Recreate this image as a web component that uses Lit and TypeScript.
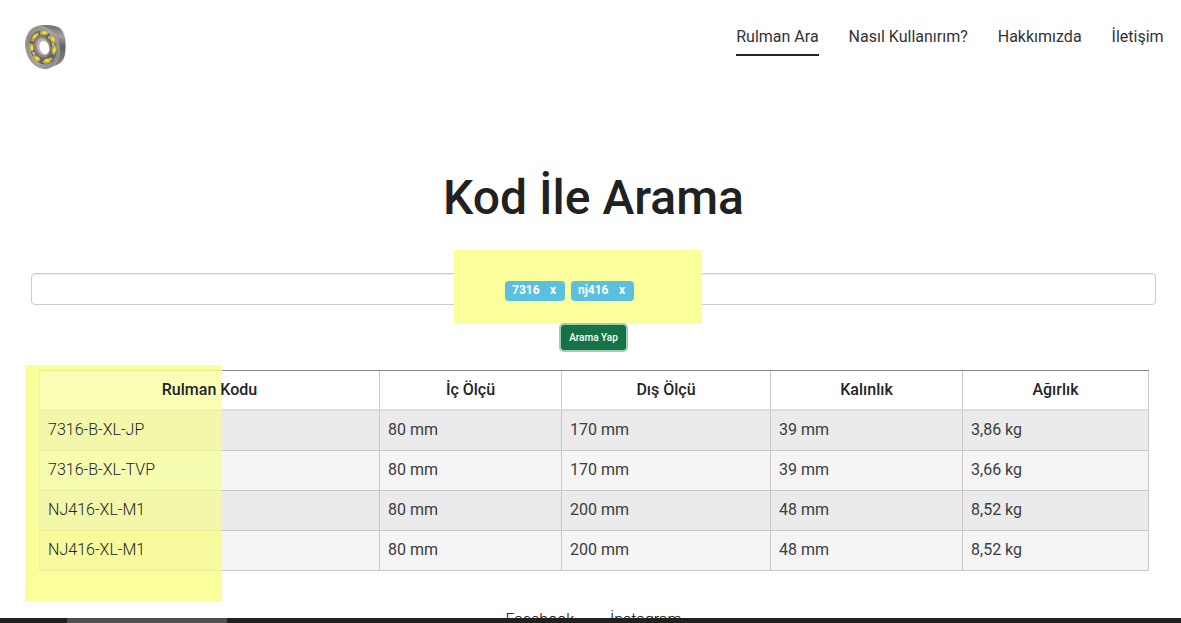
import { LitElement, html, css, svg } from "lit";
import { customElement } from "lit/decorators.js";

const NAV = ["Rulman Ara", "Nasıl Kullanırım?", "Hakkımızda", "İletişim"];
const HEAD = ["Rulman Kodu", "İç Ölçü", "Dış Ölçü", "Kalınlık", "Ağırlık"];
const ROWS = [
  ["7316-B-XL-JP", "80 mm", "170 mm", "39 mm", "3,86 kg"],
  ["7316-B-XL-TVP", "80 mm", "170 mm", "39 mm", "3,66 kg"],
  ["NJ416-XL-M1", "80 mm", "200 mm", "48 mm", "8,52 kg"],
  ["NJ416-XL-M1", "80 mm", "200 mm", "48 mm", "8,52 kg"],
];
// Centre and rotation of each rolling ball in the logo.
const BALLS = [[20, 9, 5], [28.5, 15, 60], [30, 25.5, 100], [23, 37, -15], [12.5, 34.5, 30], [7.5, 23.5, 85], [11, 13, -50]];

@customElement("bearing-logo")
export class BearingLogo extends LitElement {
  static styles = css`
    :host { display: block; width: 44px; height: 48px; }
    svg { display: block; }
  `;
  render() {
    return html`<svg width="44" height="48" viewBox="0 0 44 48">
      <defs>
        <linearGradient id="side" x1="0" y1="0" x2="0" y2="1">
          <stop offset="0" stop-color="#6f6d6b" /><stop offset=".25" stop-color="#a3a19f" />
          <stop offset=".5" stop-color="#646261" /><stop offset="1" stop-color="#918f8d" />
        </linearGradient>
        <linearGradient id="face" x1="0" y1="0" x2="1" y2="1">
          <stop offset="0" stop-color="#807e7c" /><stop offset=".5" stop-color="#aaa8a6" />
          <stop offset="1" stop-color="#7f7d7b" />
        </linearGradient>
      </defs>
      <path d="M13 2C22 0 31 1 36 4C41 9 42 16 41.500 25C41 34 39 38 33 41L22 45Z" fill="url(#side)" />
      <ellipse cx="18.500" cy="23.500" rx="16.500" ry="21.500" transform="rotate(-16 18.500 23.500)" fill="url(#face)" stroke="#9f9d9b" stroke-width="1" />
      <ellipse cx="19" cy="23.500" rx="13" ry="17.200" transform="rotate(-16 19 23.500)" fill="#65625e" />
      <ellipse cx="19" cy="23.500" rx="10.800" ry="14.500" transform="rotate(-16 19 23.500)" fill="none" stroke="#bbb9b5" stroke-width="2.500" stroke-dasharray="3 4" />
      ${BALLS.map(([x, y, a]) => svg`<g transform="translate(${x} ${y}) rotate(${a})">
          <ellipse rx="4.1" ry="2.5" fill="#c9aa2c"/><ellipse cx=".4" cy="-.4" rx="2.3" ry="1.2" fill="#efdf63"/></g>`)}
      <ellipse cx="18.500" cy="22.800" rx="8.600" ry="11.200" transform="rotate(-17 18.500 22.800)" fill="#8d8b89" stroke="#72706e" stroke-width="1" />
      <ellipse cx="19" cy="22.800" rx="6.200" ry="8.600" transform="rotate(-17 19 22.800)" fill="#b8b6b4" />
      <ellipse cx="20.300" cy="23.600" rx="4.700" ry="6.800" transform="rotate(-17 20.300 23.600)" fill="#fff" />
    </svg>`;
  }
}

@customElement("app-root")
export class AppRoot extends LitElement {
  static styles = css`
    :host {
      display: block; position: relative; height: 623px; overflow: hidden;
      background: #fff; color: #212529; font: 400 16px/24px Roboto, sans-serif;
    }
    * { box-sizing: border-box; }
    .header { display: flex; justify-content: space-between; height: 170px; padding: 24px 17.400px 0 24px; }
    .nav { display: flex; gap: 30px; height: 32px; color: #333; }
    .link { white-space: nowrap; padding-top: 1px; }
    .active { border-bottom: 2px solid #212529; }
    .title { margin: 0; height: 103px; padding-left: 6px; text-align: center; font-size: 48px; font-weight: 500; line-height: 56px; color: #212121; }
    .field {
      margin: 0 25px 0 31px; height: 32px; border: 1px solid #ccc; border-radius: 4px;
      box-shadow: inset 0 1px 1px rgba(0, 0, 0, .075);
      display: flex; gap: 6px; padding: 7px 0 0 473px;
    }
    .chip {
      position: relative; z-index: 2; height: 20px; width: 60px; padding: 0 9px 0 7px; border-radius: 4px;
      background: #5bc0de; color: #fff; font-size: 12px; font-weight: 700; line-height: 18px;
      display: flex; justify-content: space-between;
    }
    .wide { width: 63px; }
    .actions { display: flex; padding: 20px 0 20px 561px; }
    .search {
      width: 65px; height: 25px; border: 1px solid #146c43; border-radius: 3px; padding: 0;
      background: #157347; color: #fff; font: 500 10px/22px Roboto, sans-serif;
      box-shadow: 0 0 0 2px #a1cdb6; position: relative; z-index: 2;
    }
    .table { width: 1110px; margin-left: 39px; border-left: 1px solid #ccc; border-top: 1px solid #888; }
    .row { display: grid; grid-template-columns: 340px 182px 209px 192px 186px; height: 40px; background: #f5f5f5; border-bottom: 1px solid #c8c8c8; color: #3a3d41; }
    .row.odd { background: #ebebeb; }
    .row.head { background: #fff; color: #212529; font-weight: 500; border-bottom: 2px solid #dcdcdc; text-align: center; }
    .cell { border-right: 1px solid #c8c8c8; padding: 7px 8px; white-space: nowrap; }
    .text { position: relative; z-index: 2; }
    .code { font-weight: 300; color: #212529; letter-spacing: .03px; }
    .mark { position: absolute; z-index: 1; background: #faff98; opacity: .97; }
    .mark-tags { left: 454px; top: 250px; width: 248px; height: 74px; }
    .mark-codes { left: 25px; top: 365px; width: 197px; height: 236px; padding: 5px 0 0 14px; }
    .band { height: 40px; border-left: 1px solid #f4f68e; border-bottom: 1px solid #ebee9b; background: #f4f8a8; }
    .band.first { background: #fbffb4; border-top: 1px solid #eaed8e; height: 41px; }
    .band.even { background: #f7fdad; }
    .band.last { background: #f8fc9b; }
    .footer { display: flex; gap: 36px; padding: 37px 0 0 505.500px; font-weight: 300; color: #000; }
    .taskbar { position: absolute; z-index: 3; left: 0; right: 0; bottom: 0; height: 5px; background: #202021; padding-left: 67px; }
    .task { width: 160px; height: 5px; background: #505051; }
  `;
  render() {
    return html`
      <header class="header">
        <bearing-logo></bearing-logo>
        <nav class="nav">
          ${NAV.map((n, i) => html`<a class="link ${i === 0 ? "active" : ""}">${n}</a>`)}
        </nav>
      </header>
      <h1 class="title">Kod İle Arama</h1>
      <div class="field">
        <span class="chip"><span>7316</span><span>x</span></span>
        <span class="chip wide"><span>nj416</span><span>x</span></span>
      </div>
      <div class="actions"><button class="search">Arama Yap</button></div>
      <div class="table">
        <div class="row head">${HEAD.map((h) => html`<div class="cell"><span class="text">${h}</span></div>`)}</div>
        ${ROWS.map((r, i) => html`<div class="row ${i % 2 ? "" : "odd"}">
          ${r.map((c, j) => html`<div class="cell"><span class="text ${j ? "" : "code"}">${c}</span></div>`)}
        </div>`)}
      </div>
      <footer class="footer"><span>Facebook</span><span>İnstagram</span></footer>
      <div class="mark mark-tags"></div>
      <div class="mark mark-codes">
        <div class="band first"></div><div class="band"></div><div class="band even"></div>
        <div class="band"></div><div class="band last"></div>
      </div>
      <div class="taskbar"><div class="task"></div></div>
    `;
  }
}
